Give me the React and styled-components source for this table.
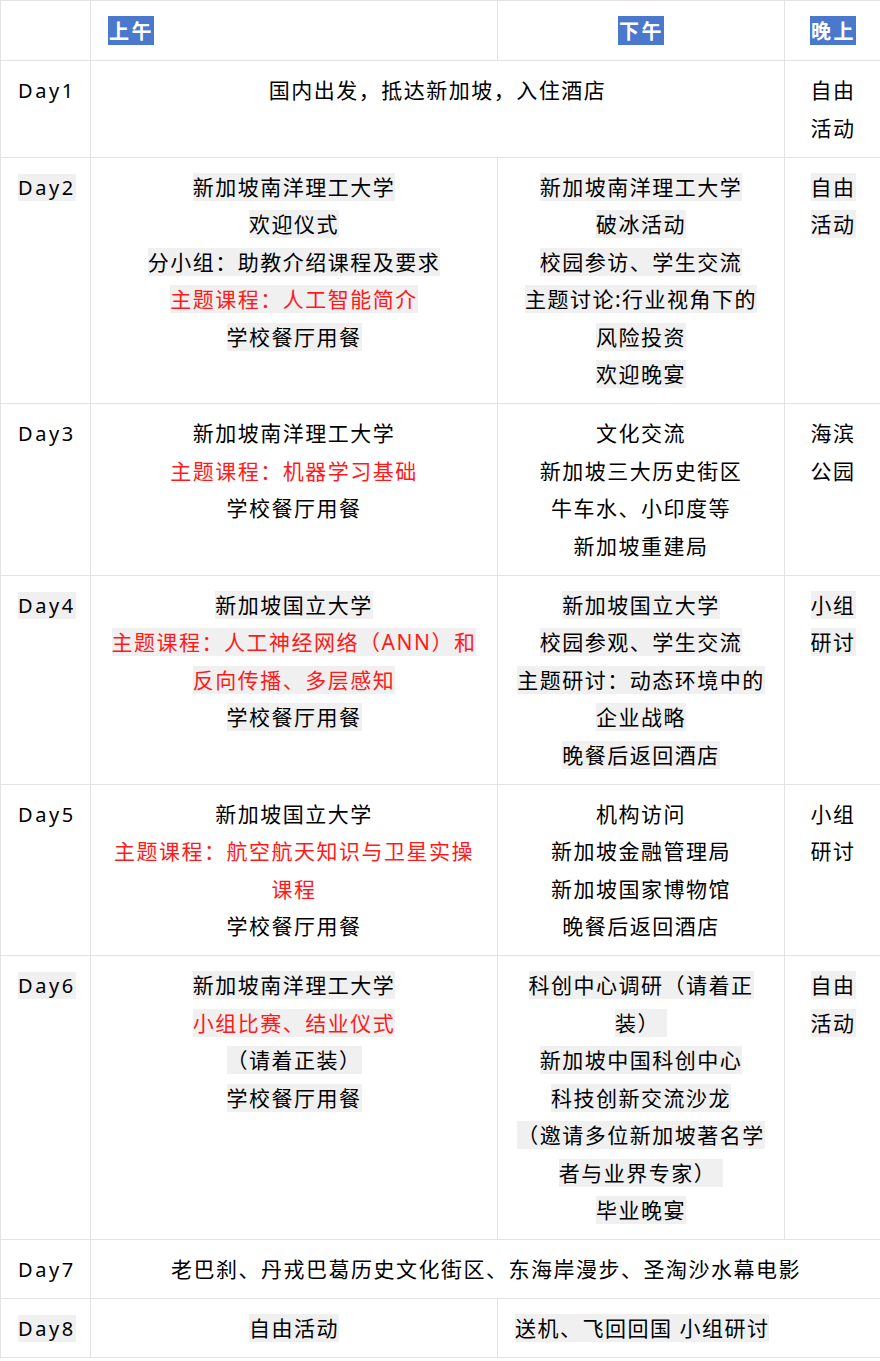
import React from 'react';
import styled, { createGlobalStyle } from 'styled-components';

const GlobalStyle = createGlobalStyle`
  html, body {
    margin: 0;
    padding: 0;
    background: #ffffff;
    overflow: hidden;
  }
  body {
    font-family: "Noto Sans", "Noto Sans CJK SC", sans-serif;
  }
`;

const red = (t) => ({ t, red: true });

const rows = [
  {
    day: 'Day1',
    cells: [
      { span: 2, lines: ['国内出发，抵达新加坡，入住酒店'] },
      { lines: ['自由', '活动'] },
    ],
  },
  {
    day: 'Day2',
    cells: [
      { lines: ['新加坡南洋理工大学', '欢迎仪式', '分小组：助教介绍课程及要求', red('主题课程：人工智能简介'), '学校餐厅用餐'] },
      { lines: ['新加坡南洋理工大学', '破冰活动', '校园参访、学生交流', '主题讨论:行业视角下的', '风险投资', '欢迎晚宴'] },
      { lines: ['自由', '活动'] },
    ],
  },
  {
    day: 'Day3',
    cells: [
      { lines: ['新加坡南洋理工大学', red('主题课程：机器学习基础'), '学校餐厅用餐'] },
      { lines: ['文化交流', '新加坡三大历史街区', '牛车水、小印度等', '新加坡重建局'] },
      { lines: ['海滨', '公园'] },
    ],
  },
  {
    day: 'Day4',
    cells: [
      { lines: ['新加坡国立大学', red('主题课程：人工神经网络（ANN）和'), red('反向传播、多层感知'), '学校餐厅用餐'] },
      { lines: ['新加坡国立大学', '校园参观、学生交流', '主题研讨：动态环境中的', '企业战略', '晚餐后返回酒店'] },
      { lines: ['小组', '研讨'] },
    ],
  },
  {
    day: 'Day5',
    cells: [
      { lines: ['新加坡国立大学', red('主题课程：航空航天知识与卫星实操'), red('课程'), '学校餐厅用餐'] },
      { lines: ['机构访问', '新加坡金融管理局', '新加坡国家博物馆', '晚餐后返回酒店'] },
      { lines: ['小组', '研讨'] },
    ],
  },
  {
    day: 'Day6',
    cells: [
      { lines: ['新加坡南洋理工大学', red('小组比赛、结业仪式'), '（请着正装）', '学校餐厅用餐'] },
      { lines: ['科创中心调研（请着正', '装） ', '新加坡中国科创中心', '科技创新交流沙龙', '（邀请多位新加坡著名学', '者与业界专家） ', '毕业晚宴'] },
      { lines: ['自由', '活动'] },
    ],
  },
  {
    day: 'Day7',
    cells: [
      { span: 3, lines: ['老巴刹、丹戎巴葛历史文化街区、东海岸漫步、圣淘沙水幕电影'] },
    ],
  },
  {
    day: 'Day8',
    cells: [
      { lines: ['自由活动'] },
      { span: 2, align: 'left', lines: ['送机、飞回回国 小组研讨'] },
    ],
  },
];

const App = () => {
  return (
    <>
      <GlobalStyle />
      <Table>
        <colgroup>
          <col style={{ width: 90 }} />
          <col style={{ width: 407 }} />
          <col style={{ width: 287 }} />
          <col style={{ width: 97 }} />
        </colgroup>
        <thead>
          <tr>
            <HeadCell />
            <HeadCell $align="left"><Label>上午</Label></HeadCell>
            <HeadCell><Label>下午</Label></HeadCell>
            <HeadCell><Label>晚上</Label></HeadCell>
          </tr>
        </thead>
        <tbody>
          {rows.map((row, i) => {
            const shaded = i % 2 === 1;
            return (
              <tr key={row.day}>
                <DayCell>
                  <Text $shaded={shaded}>{row.day}</Text>
                </DayCell>
                {row.cells.map((cell, j) => (
                  <Cell key={j} colSpan={cell.span || 1} $align={cell.align}>
                    {cell.lines.map((line, k) => {
                      const isRed = typeof line === 'object';
                      return (
                        <Line key={k}>
                          <Text $shaded={shaded} $red={isRed}>
                            {isRed ? line.t : line}
                          </Text>
                        </Line>
                      );
                    })}
                  </Cell>
                ))}
              </tr>
            );
          })}
        </tbody>
      </Table>
    </>
  );
};

const Table = styled.table`
  width: 881px;
  table-layout: fixed;
  border-collapse: collapse;
  font-size: 21px;
  letter-spacing: 1.5px;
  color: #000000;
`;

const HeadCell = styled.th`
  height: 59px;
  padding: 0 17px;
  border: 1px solid #e3e3e3;
  text-align: ${(p) => p.$align || 'center'};
  vertical-align: middle;
  font-weight: normal;
`;

const Label = styled.span`
  display: inline-block;
  height: 29px;
  line-height: 29px;
  padding-left: 1px;
  font-size: 20px;
  letter-spacing: 2.4px;
  background: #4a78cd;
  color: #ffffff;
  font-weight: bold;
  font-family: "Noto Sans CJK SC", sans-serif;
`;

const DayCell = styled.td`
  padding: 11px 17px 9.5px;
  border: 1px solid #e3e3e3;
  vertical-align: top;
  text-align: left;
  line-height: 37.5px;
  font-size: 20px;
  letter-spacing: 2.6px;
`;

const Cell = styled.td`
  padding: 11px 17px 9.5px;
  border: 1px solid #e3e3e3;
  vertical-align: top;
  text-align: ${(p) => p.$align || 'center'};
  line-height: 37.5px;
`;

const Line = styled.div`
  white-space: pre;
`;

const Text = styled.span`
  background: ${(p) => (p.$shaded ? '#f0f0f0' : 'transparent')};
  color: ${(p) => (p.$red ? '#ff1a1a' : '#000000')};
`;

export default App;
